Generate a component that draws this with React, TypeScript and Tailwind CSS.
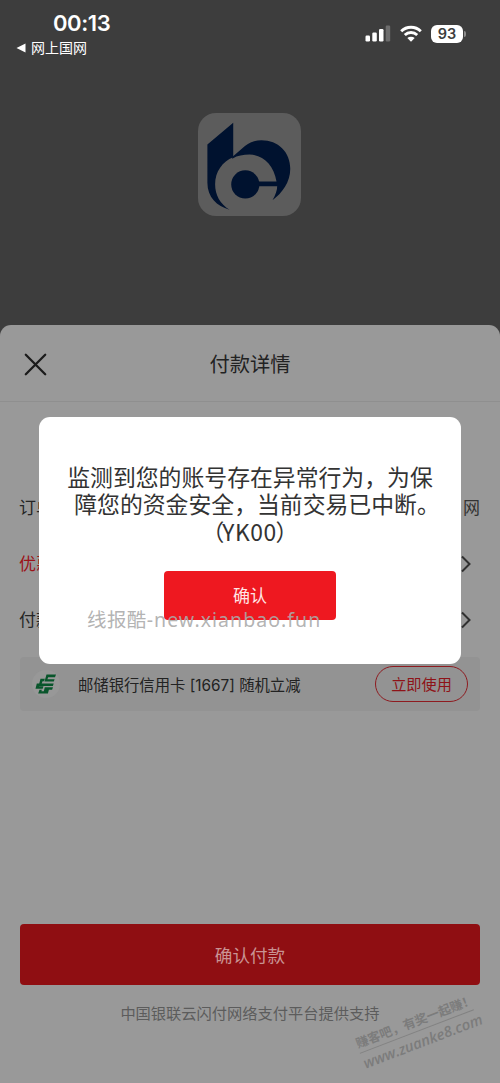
interface DetailRowProps {
  label: string;
  value?: string;
  highlight?: boolean;
  arrow?: boolean;
}

function StatusBar() {
  return (
    <div className="flex justify-between h-[70px] text-white">
      <div className="pt-[10px] pl-4">
        <div className="pl-[37px] text-[22px] leading-[27px] font-semibold font-[Inter,sans-serif] tracking-[-0.4px]">00:13</div>
        <div className="flex items-center gap-[5px] mt-[1px] text-[14px] leading-5">
          <svg width="10" height="10" viewBox="0 0 10 10" fill="currentColor">
            <path d="M0.5 5 9.5 0.5v9z" />
          </svg>
          网上国网
        </div>
      </div>
      <div className="flex items-center h-[67px] pr-[34px]">
        <svg width="26" height="17" viewBox="0 0 26 17" fill="currentColor">
          <rect x="0.5" y="10.5" width="4.5" height="6" rx="1.2" />
          <rect x="7.3" y="7.5" width="4.5" height="9" rx="1.2" />
          <rect x="14" y="4" width="4.5" height="12.5" rx="1.2" />
          <rect x="20.7" y="0.5" width="4.5" height="16" rx="1.2" opacity="0.25" />
        </svg>
        <svg className="ml-[9px]" width="22" height="17" viewBox="0 0 22 17" fill="none" stroke="currentColor" strokeWidth="2.9">
          <path d="M1.2 6.2a14 14 0 0 1 19.6 0" />
          <path d="M4.8 10a9 9 0 0 1 12.4 0" />
          <path d="M11 16.8 7.3 13.1a5.4 5.4 0 0 1 7.4 0z" fill="currentColor" stroke="none" />
        </svg>
        <div className="flex items-center justify-center ml-[9px] w-8 h-[18px] rounded-[6px] bg-white text-[#3d3d3d] text-[14.5px] leading-[18px] font-semibold font-[Inter,sans-serif]">
          93
        </div>
        <div className="ml-[1px] w-[2px] h-[6px] rounded-r-full bg-[#8b8b8b]" />
      </div>
    </div>
  );
}

function BankLogo() {
  return (
    <div className="w-[103px] h-[103px] rounded-[18px] bg-[#5c5c5c] overflow-hidden">
      <svg className="w-full h-full" viewBox="26 24 307 307" fill="#00122f">
        <path d="M54 118 131 53V156C99 168 77 200 77 236C77 268 92 295 120 312C82 302 54 275 54 232Z" />
        <path d="M128 155 166 122C184 110 198 105 215 105C265 105 301 140 301 190C301 230 277 262 248 284C257 268 262 254 262 242H204V228H260C252 180 220 148 180 148C160 148 145 151 128 160Z" />
        <circle cx="167" cy="237" r="42" />
      </svg>
    </div>
  );
}

function PostalBankIcon() {
  return (
    <div className="flex items-center justify-center w-7 h-7 rounded-full bg-[#989898]">
      <svg width="22" height="22" viewBox="0 0 22 22" fill="#08552b">
        <path d="M11.5 1.5h9.5l-1 2.7h-6.8l-.8 2h7.2l-.8 2.3H9.5z" />
        <path d="M5.5 5.8h4.4l-.9 2.4H7.6l-.9 2.4h12l-.8 2.5H3.6z" />
        <path d="M1.8 10.6h3.1l-.8 2.6h4.4l-.8 2.5H.5z" />
        <path d="M9.8 14.2h8.2l-.9 2.6h-3.2l-1 3.7H3.2l1.3-3.8h2.4l-.5 1.6h2.4z" />
      </svg>
    </div>
  );
}

function DetailRow({ label, value, highlight, arrow }: DetailRowProps) {
  return (
    <div className={`flex items-center justify-between h-14 text-[17px] ${highlight ? "text-[#9b1419]" : "text-[#252525]"}`}>
      <span className="-ml-[1px] pt-[2px]">{label}</span>
      {value && <span className="pt-[2px] text-[#343434]">{value}</span>}
      {arrow && (
        <svg className="mr-[9px]" width="10" height="18" viewBox="0 0 10 18" fill="none" stroke="#303030" strokeWidth="2">
          <path d="m1 1.5 7.5 7.5L1 16.5" />
        </svg>
      )}
    </div>
  );
}

function Dialog() {
  return (
    <div className="absolute top-[417px] left-[39px] flex flex-col items-center w-[422px] h-[247px] pt-12 rounded-[11px] bg-white">
      <div className="text-[22.85px] leading-[27px] text-[#333] text-center whitespace-nowrap">
        <p>监测到您的账号存在异常行为，为保</p>
        <p className="pl-[14px]">障您的资金安全，当前交易已中断。</p>
        <p className="h-[27px] leading-[25px] font-['Noto_Sans_CJK_SC',sans-serif]">
          （<span className="-ml-[2px] -mr-[1px] tracking-[0.5px]">YK00</span>）
        </p>
      </div>
      <button className="mt-[25px] w-[172px] h-[49px] pt-[2px] rounded-[4px] bg-[#ee1820] text-[17px] text-[#ffe5e5]">确认</button>
    </div>
  );
}

export default function App() {
  return (
    <div className="relative flex flex-col w-[500px] h-[1083px] overflow-hidden bg-[#3d3d3d] font-[Inter,'Noto_Sans_CJK_SC',sans-serif]">
      <StatusBar />
      <div className="flex justify-center h-[255px] pt-[43px] pr-[1px]">
        <BankLogo />
      </div>

      <div className="flex flex-col flex-1 rounded-t-[11px] bg-[#999]">
        <div className="relative flex items-center justify-center h-[77px] pt-[4px] border-b border-[#8f8f8f] text-[20.3px] text-[#222]">
          <svg className="absolute left-6 top-7" width="23" height="23" viewBox="0 0 23 23" stroke="#1b1b1b" strokeWidth="2.3" strokeLinecap="round">
            <path d="m1.8 1.8 19.4 19.4M21.2 1.8 1.8 21.2" />
          </svg>
          付款详情
        </div>

        <div className="flex flex-col flex-1 px-5 pt-[78px]">
          <DetailRow label="订单" value="网" />
          <DetailRow label="优惠" highlight arrow />
          <DetailRow label="付款" arrow />
          <div className="flex items-center h-[54px] mt-[9px] pl-3 pr-3 rounded-[4px] bg-[#939393]">
            <PostalBankIcon />
            <span className="ml-[18px] pt-[3px] text-[15.35px] text-[#222]">邮储银行信用卡 [1667] 随机立减</span>
            <button className="ml-auto w-[93px] h-9 pt-[2px] rounded-full border-[1.5px] border-[#8e1b20] text-[15.2px] text-[#8e1318]">
              立即使用
            </button>
          </div>
          <button className="mt-[213px] h-[61px] pt-[3px] rounded-[4px] bg-[#8f0e12] text-[17.6px] text-[#c99393]">确认付款</button>
          <p className="mt-[17px] text-center text-[15.25px] leading-6 text-[#5c5c5c]">中国银联云闪付网络支付平台提供支持</p>
        </div>
      </div>

      <Dialog />

      {/* 水印 */}
      <div className="absolute top-[607px] left-[87px] text-[19.5px] leading-[26px] tracking-[0.4px] whitespace-nowrap text-[#aaa]/90 font-['Noto_Sans','Noto_Sans_CJK_SC',sans-serif]">
        线报酷<span className="tracking-[1.05px]">-new.xianbao.fun</span>
      </div>
      <div className="absolute top-[1012px] left-[356px] w-[122px] -rotate-[21deg] whitespace-nowrap text-[#7c7c7c]">
        <div className="border-b border-[#828282] text-[12.6px] leading-[19px] font-bold">赚客吧，有奖一起赚！</div>
        <div className="text-[14.8px] leading-[20px] font-semibold italic font-['Open_Sans',sans-serif]">www.zuanke8.com</div>
      </div>
    </div>
  );
}
